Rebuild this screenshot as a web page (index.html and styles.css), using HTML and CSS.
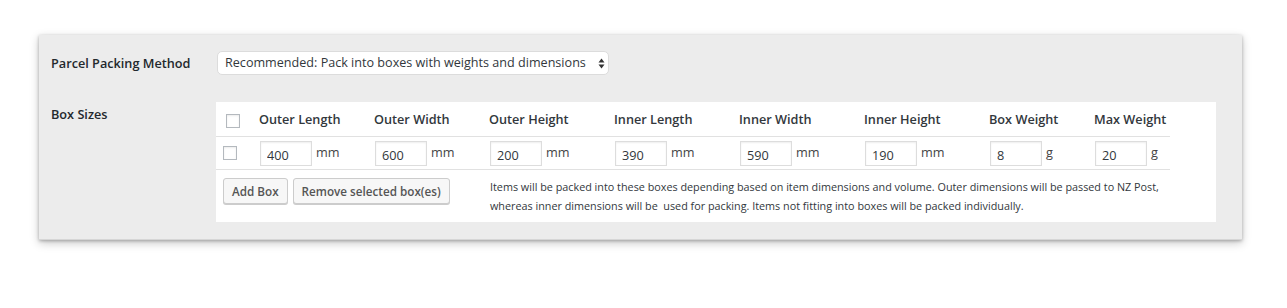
FILE: index.html
```html
<!DOCTYPE html>
<html>
<head>
<meta charset="utf-8">
<link rel="stylesheet" href="styles.css">
</head>
<body>
<div class="panel">
  <div class="label">Parcel Packing Method</div>
  <div class="field">
    <div class="select-wrap">
      <select class="select">
        <option>Recommended: Pack into boxes with weights and dimensions</option>
      </select>
      <svg class="select-arrow" width="7" height="11" viewBox="0 0 7 11"><path d="M3.5 0.5 L6.5 4.5 L0.5 4.5 Z M3.5 10.5 L6.5 6.5 L0.5 6.5 Z" fill="#333"/></svg>
    </div>
  </div>
  <div class="label">Box Sizes</div>
  <div class="field">
    <div class="boxes">
      <div class="row head">
        <div class="cell chk-h"><span class="checkbox"></span></div>
        <div class="cell">Outer Length</div>
        <div class="cell">Outer Width</div>
        <div class="cell">Outer Height</div>
        <div class="cell">Inner Length</div>
        <div class="cell">Inner Width</div>
        <div class="cell">Inner Height</div>
        <div class="cell">Box Weight</div>
        <div class="cell">Max Weight</div>
      </div>
      <div class="row data">
        <div class="cell chk-d"><span class="checkbox"></span></div>
        <div class="cell val"><input class="num" value="400"><span class="unit">mm</span></div>
        <div class="cell val"><input class="num" value="600"><span class="unit">mm</span></div>
        <div class="cell val"><input class="num" value="200"><span class="unit">mm</span></div>
        <div class="cell val"><input class="num" value="390"><span class="unit">mm</span></div>
        <div class="cell val"><input class="num" value="590"><span class="unit">mm</span></div>
        <div class="cell val"><input class="num" value="190"><span class="unit">mm</span></div>
        <div class="cell val"><input class="num" value="8"><span class="unit">g</span></div>
        <div class="cell val"><input class="num" value="20"><span class="unit">g</span></div>
      </div>
      <div class="foot">
        <div class="buttons">
          <button class="btn">Add Box</button>
          <button class="btn">Remove selected box(es)</button>
        </div>
        <div class="desc">Items will be packed into these boxes depending based on item dimensions and volume. Outer dimensions will be passed to NZ Post,<br>whereas inner dimensions will be&nbsp; used for packing. Items not fitting into boxes will be packed individually.</div>
      </div>
    </div>
  </div>
</div>
</body>
</html>
```

FILE: styles.css
```css
* { box-sizing: border-box; }
html, body { margin: 0; padding: 0; background: #fff; }
body {
  font-family: "Open Sans", "Noto Sans", sans-serif;
  font-size: 12.7px;
  color: #444;
  padding: 35px 0 40px 39px;
}
.panel {
  width: 1203px;
  height: 205px;
  background: #ececec;
  border-bottom: 1px solid #d6d6d6;
  box-shadow: 0 1px 3px rgba(0, 0, 0, 0.25), 0 3px 9px rgba(0, 0, 0, 0.22);
  padding: 16px 26px 17px 12px;
  display: grid;
  grid-template-columns: 165px 1fr;
  grid-template-rows: 24px 120px;
  row-gap: 27px;
}
.label {
  font-weight: 600;
  font-size: 12.7px;
  line-height: 24px;
  color: #23282d;
}
.field { min-width: 0; }
.select-wrap {
  position: relative;
  width: 392px;
  height: 24px;
  margin-left: 1px;
}
.select {
  appearance: none;
  -webkit-appearance: none;
  width: 100%;
  height: 24px;
  border: 1px solid #dcdcdc;
  border-radius: 5px;
  background: #fff;
  font-family: "Open Sans", sans-serif;
  font-size: 12.6px;
  color: #32373c;
  padding: 0 7px;
  line-height: 22px;
}
.select-arrow {
  position: absolute;
  right: 4px;
  top: 7px;
}
.boxes {
  background: #fff;
  width: 1000px;
  height: 120px;
}
.row {
  display: grid;
  grid-template-columns: 34px 115px 115px 125px 125px 125px 125px 105px 85px;
  width: 954px;
  border-bottom: 1px solid #e1e1e1;
}
.row.head { height: 35px; align-items: center; }
.row.data { height: 33px; align-items: center; }
.head .cell {
  padding-left: 9px;
  font-weight: 600;
  color: #32373c;
  font-size: 12.7px;
  line-height: 18px;
  padding-bottom: 1px;
}
.head .chk-h { padding-left: 10px; padding-top: 5px; }
.data .chk-d { padding-left: 7px; padding-bottom: 1px; }
.checkbox {
  display: block;
  width: 14px;
  height: 14px;
  border: 1px solid #b4b9be;
  background: #fff;
  box-shadow: inset 0 1px 2px rgba(0, 0, 0, 0.08);
}
.val {
  display: flex;
  align-items: center;
  padding-left: 10px;
}
.num {
  width: 52px;
  height: 25px;
  border: 1px solid #dddddd;
  box-shadow: inset 0 1px 2px rgba(0, 0, 0, 0.07);
  font-family: "Open Sans", sans-serif;
  font-size: 12.7px;
  color: #32373c;
  padding: 2px 0 0 6px;
  margin: 0;
  margin-top: 1px;
}
.unit {
  margin-left: 4px;
  margin-top: -3px;
  color: #444;
}
.foot {
  display: flex;
  width: 954px;
  height: 51px;
}
.buttons {
  width: 264px;
  padding: 8px 0 0 7px;
  display: flex;
  align-items: flex-start;
  gap: 5px;
}
.btn {
  height: 26px;
  padding: 0 8px;
  background: #f7f7f7;
  border: 1px solid #cccccc;
  border-radius: 3px;
  box-shadow: 0 1px 0 #cccccc;
  font-family: "Open Sans", sans-serif;
  font-weight: 600;
  font-size: 11.7px;
  color: #555;
  line-height: 24px;
  margin: 0;
}
.desc {
  padding: 7px 0 0 10px;
  font-size: 10.8px;
  line-height: 19px;
  color: #32373c;
  white-space: nowrap;
}
```
